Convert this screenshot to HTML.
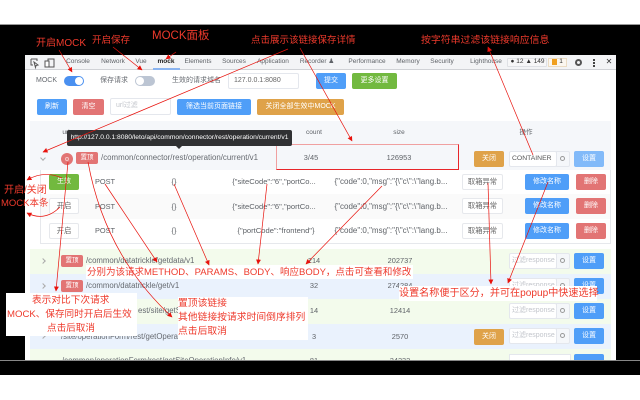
<!DOCTYPE html>
<html lang="zh"><head><meta charset="utf-8"><style>
html,body{margin:0;padding:0;background:#fff}
#p{position:relative;width:640px;height:400px;overflow:hidden;background:#fff;font-family:"Liberation Sans","Noto Sans CJK SC",sans-serif}
#p div{position:absolute;box-sizing:border-box;white-space:nowrap}
.t{font-size:6.5px;color:#5f6368;line-height:10px;height:10px;transform:translate(-50%,0)}
.n{font-size:7.4px}
.j{font-size:7.6px}
.k{font-size:8px}
.g{font-size:7.8px;color:#666a70;line-height:10px;height:10px}
.b{border-radius:2px;color:#fff;font-size:7px;text-align:center}
.bl{background:#4f9ef8}.rd{background:#e27474}.or{background:#dfa249}.gr{background:#72b93f}
.w{background:#fff;border:1px solid #e6e8ec;color:#666;border-radius:2px;font-size:7.3px;text-align:center}
.r{color:#ee3a2c;line-height:1.2}
.f{background:#fff;border:1px solid #e4e7ed;border-radius:2px;color:#c3c6cc;font-size:7px;line-height:14px;padding-left:2px;overflow:hidden}
.s{background:#f5f7fa;border:1px solid #e4e7ed;border-radius:0 2px 2px 0}
.s:after{content:"";position:absolute;left:3px;top:4px;width:5px;height:5px;box-sizing:border-box;border:1px solid #999;border-radius:50%}
.c{width:4px;height:4px;border-right:1px solid #aaa;border-top:1px solid #aaa;transform:rotate(45deg)}
</style></head><body><div id="p">
<div style="left:0;top:24px;width:640px;height:351px;background:#000;border-top:1px solid #999"></div>
<div style="left:25px;top:55px;width:591px;height:305px;background:#fff"></div>

<!-- tab bar -->
<div style="left:25px;top:55px;width:591px;height:15px;background:#f3f4f6;border-bottom:1px solid #d0d2d6"></div>
<div class="t" style="left:78px;top:57px">Console</div>
<div class="t" style="left:113px;top:57px">Network</div>
<div class="t" style="left:141px;top:57px">Vue</div>
<div class="t" style="left:166px;top:57px;color:#222;font-weight:bold">mock</div>
<div style="left:153px;top:68px;width:27px;height:2px;background:#8ab4f0"></div>
<div class="t" style="left:198px;top:57px">Elements</div>
<div class="t" style="left:234px;top:57px">Sources</div>
<div class="t" style="left:273px;top:57px">Application</div>
<div class="t" style="left:317px;top:57px">Recorder ♟</div>
<div class="t" style="left:367px;top:57px">Performance</div>
<div class="t" style="left:408px;top:57px">Memory</div>
<div class="t" style="left:442px;top:57px">Security</div>
<div class="t" style="left:486px;top:57px">Lighthouse</div>
<div style="left:507px;top:58px;width:40px;height:9px;border:1px solid #dfe1e5;border-radius:1px;background:#f7f7f8"></div>
<div class="t" style="left:517px;top:57px;color:#333">● 12</div>
<div class="t" style="left:535px;top:57px;color:#333">▲ 149</div>
<div style="left:548px;top:58px;width:19px;height:9px;border:1px solid #ebdcc4;background:#fbf7f0"></div>
<div style="left:552px;top:59px;width:5px;height:6px;background:#f0a020"></div>
<div class="t" style="left:561px;top:57px;color:#333">1</div>
<div style="left:575px;top:59px;width:7px;height:7px;border-radius:50%;border:2px solid #555"></div>
<div style="left:593px;top:59px;width:2px;height:2px;background:#444;box-shadow:0 3px 0 #444,0 6px 0 #444"></div>
<div class="t" style="left:609px;top:57px;color:#333;font-size:8px">✕</div>
<svg style="position:absolute;left:25px;top:55px" width="40" height="15"><path d="M6 4h6v2M6 4v6h2M9 7l4 3-2 .5-.5 2z" fill="none" stroke="#555" stroke-width="1"/><rect x="23" y="4" width="6" height="8" fill="none" stroke="#555"/><rect x="20" y="6" width="4" height="6" fill="#fff" stroke="#555"/></svg>

<!-- row 1 settings -->
<div class="g" style="left:36px;top:76px;font-size:7px">MOCK</div>
<div style="left:64px;top:76px;width:20px;height:10px;border-radius:5px;background:#4a90f0"></div>
<div style="left:75px;top:77px;width:8px;height:8px;border-radius:50%;background:#fff"></div>
<div class="g" style="left:100px;top:76px;font-size:7px">保存请求</div>
<div style="left:135px;top:76px;width:20px;height:10px;border-radius:5px;background:#bcc5d3"></div>
<div style="left:136px;top:77px;width:8px;height:8px;border-radius:50%;background:#fff"></div>
<div class="g" style="left:172px;top:76px;font-size:7px">生效的请求域名</div>
<div class="f" style="left:228px;top:73px;width:71px;height:16px;color:#666;padding-left:5px;line-height:14px;font-size:7px">127.0.0.1:8080</div>
<div class="b bl" style="left:316px;top:73px;width:30px;height:16px;line-height:16px">提交</div>
<div class="b gr" style="left:352px;top:73px;width:45px;height:16px;line-height:16px">更多设置</div>

<!-- row 2 -->
<div class="b bl" style="left:37px;top:99px;width:30px;height:16px;line-height:16px">刷新</div>
<div class="b rd" style="left:73px;top:99px;width:31px;height:16px;line-height:16px">清空</div>
<div class="f" style="left:110px;top:98px;width:61px;height:17px;padding-left:5px;font-size:7px">url过滤</div>
<div class="b bl" style="left:177px;top:99px;width:74px;height:16px;line-height:16px">筛选当前页面链接</div>
<div class="b or" style="left:257px;top:99px;width:87px;height:16px;line-height:16px">关闭全部生效中MOCK</div>

<!-- table -->
<div style="left:30px;top:121px;width:581px;height:49px;background:#f5f7fa"></div>
<div class="t" style="left:66px;top:128px">url</div>
<div class="t" style="left:314px;top:128px">count</div>
<div class="t" style="left:399px;top:128px">size</div>
<div class="t" style="left:526px;top:128px">操作</div>
<div class="c" style="left:41px;top:156px;transform:rotate(135deg)"></div>
<div style="left:61px;top:153px;width:12px;height:12px;border-radius:50%;background:#e27474"></div>
<div style="left:65px;top:157px;width:4px;height:4px;border-radius:50%;border:1px solid #f4c4c4"></div>
<div class="b rd" style="left:76px;top:152px;width:22px;height:12px;line-height:12px;font-size:6.5px">置顶</div>
<div class="g" style="left:101px;top:153px;font-size:7.9px">/common/connector/rest/operation/current/v1</div>
<div class="t n" style="left:311px;top:153px">3/45</div>
<div class="t n" style="left:399px;top:153px">126953</div>
<div style="left:276px;top:144px;width:183px;height:26px;border:1px solid #e8262a;border-left-color:#f0a0a0;border-top-color:#f0a0a0"></div>
<div class="b or" style="left:474px;top:151px;width:30px;height:16px;line-height:16px">关闭</div>
<div class="f" style="left:509px;top:151px;width:48px;height:16px;color:#555;font-size:6.8px">CONTAINER</div>
<div class="s" style="left:556px;top:151px;width:14px;height:16px"></div>
<div class="b" style="left:574px;top:151px;width:30px;height:16px;line-height:16px;background:#82baf9">设置</div>

<!-- sub table -->
<div style="left:40px;top:170px;width:571px;height:74px;background:#fff;border:1px solid #e6e8ec;border-top:0"></div>
<div style="left:41px;top:194px;width:569px;height:25px;background:#fafafa"></div>
<div class="b gr" style="left:49px;top:174px;width:30px;height:16px;line-height:16px">生效</div>
<div class="w" style="left:49px;top:198px;width:30px;height:16px;line-height:14px">开启</div>
<div class="w" style="left:49px;top:223px;width:30px;height:16px;line-height:14px">开启</div>
<div class="t n" style="left:105px;top:177px">POST</div><div class="t n" style="left:105px;top:202px">POST</div><div class="t n" style="left:105px;top:226px">POST</div>
<div class="t n" style="left:174px;top:177px">{}</div><div class="t n" style="left:174px;top:202px">{}</div><div class="t n" style="left:174px;top:226px">{}</div>
<div class="t j" style="left:274px;top:177px">{"siteCode":"6","portCo...</div>
<div class="t j" style="left:274px;top:202px">{"siteCode":"6","portCo...</div>
<div class="t j" style="left:276px;top:226px">{"portCode":"frontend"}</div>
<div class="t k" style="left:391px;top:177px">{"code":0,"msg":"{\"c\":\"lang.b...</div>
<div class="t k" style="left:391px;top:202px">{"code":0,"msg":"{\"c\":\"lang.b...</div>
<div class="t k" style="left:391px;top:226px">{"code":0,"msg":"{\"c\":\"lang.b...</div>
<div class="w" style="left:462px;top:174px;width:41px;height:16px;line-height:14px">取箱异常</div>
<div class="w" style="left:462px;top:198px;width:41px;height:16px;line-height:14px">取箱异常</div>
<div class="w" style="left:462px;top:223px;width:41px;height:16px;line-height:14px">取箱异常</div>
<div class="b bl" style="left:525px;top:174px;width:44px;height:16px;line-height:16px">修改名称</div>
<div class="b bl" style="left:525px;top:198px;width:44px;height:16px;line-height:16px">修改名称</div>
<div class="b bl" style="left:525px;top:223px;width:44px;height:16px;line-height:16px">修改名称</div>
<div class="b rd" style="left:576px;top:174px;width:30px;height:16px;line-height:16px">删除</div>
<div class="b rd" style="left:576px;top:198px;width:30px;height:16px;line-height:16px">删除</div>
<div class="b rd" style="left:576px;top:223px;width:30px;height:16px;line-height:16px">删除</div>

<!-- colored rows -->
<div style="left:30px;top:249px;width:581px;height:25px;background:#f3fbec"></div>
<div style="left:30px;top:274px;width:581px;height:25px;background:#eaf2fd"></div>
<div style="left:30px;top:299px;width:581px;height:25px;background:#f3fbec"></div>
<div style="left:30px;top:324px;width:581px;height:25px;background:#eaf2fd"></div>
<div style="left:30px;top:349px;width:581px;height:11px;background:#f3fbec"></div>

<div class="b rd" style="left:61px;top:255px;width:22px;height:12px;line-height:12px;font-size:6.5px">置顶</div>
<div class="b rd" style="left:61px;top:280px;width:22px;height:12px;line-height:12px;font-size:6.5px">置顶</div>
<div class="c" style="left:41px;top:259px"></div>
<div class="c" style="left:41px;top:284px"></div>
<div class="c" style="left:41px;top:334px"></div>
<div class="g" style="left:86px;top:256px">/common/datatrickle/getdata/v1</div>
<div class="g" style="left:86px;top:281px">/common/datatrickle/get/v1</div>
<div class="g" style="left:138px;top:306px">est/site/getSite</div>
<div class="g" style="left:61px;top:332px">/site/operationForm/rest/getOperationForm</div>
<div class="g" style="left:62px;top:356px">/common/operationForm/rest/getSiteOperationInfo/v1</div>
<div class="t n" style="left:400px;top:256px">202737</div>
<div class="t n" style="left:400px;top:281px">274284</div>
<div class="t n" style="left:400px;top:306px">12414</div>
<div class="t n" style="left:400px;top:332px">2570</div>
<div class="t n" style="left:400px;top:356px">24232</div>
<div class="t n" style="left:314px;top:256px">214</div>
<div class="t n" style="left:314px;top:281px">32</div>
<div class="t n" style="left:314px;top:306px">14</div>
<div class="t n" style="left:314px;top:332px">3</div>
<div class="t n" style="left:314px;top:356px">81</div>
<div class="b or" style="left:474px;top:329px;width:30px;height:16px;line-height:16px">关闭</div>

<div class="f" style="left:509px;top:253px;width:48px;height:16px">过滤response</div><div class="s" style="left:556px;top:253px;width:14px;height:16px"></div><div class="b bl" style="left:574px;top:253px;width:30px;height:16px;line-height:16px">设置</div>
<div class="f" style="left:509px;top:278px;width:48px;height:16px">过滤response</div><div class="s" style="left:556px;top:278px;width:14px;height:16px"></div><div class="b bl" style="left:574px;top:278px;width:30px;height:16px;line-height:16px">设置</div>
<div class="f" style="left:509px;top:303px;width:48px;height:16px">过滤response</div><div class="s" style="left:556px;top:303px;width:14px;height:16px"></div><div class="b bl" style="left:574px;top:303px;width:30px;height:16px;line-height:16px">设置</div>
<div class="f" style="left:509px;top:328px;width:48px;height:16px">过滤response</div><div class="s" style="left:556px;top:328px;width:14px;height:16px"></div><div class="b bl" style="left:574px;top:328px;width:30px;height:16px;line-height:16px">设置</div>
<div style="left:509px;top:354px;width:62px;height:6px;background:#fff;border:1px solid #e4e7ed;border-bottom:0"></div>
<div class="b bl" style="left:574px;top:354px;width:30px;height:6px;border-radius:2px 2px 0 0"></div>

<!-- bottom black strip clips the last row -->
<div style="left:0;top:360px;width:640px;height:15px;background:#000;border-top:1px solid #888"></div>

<!-- tooltip -->
<div style="left:67px;top:130px;width:225px;height:16px;background:#303133;border-radius:2px;color:#fff;font-size:6.7px;line-height:16px;text-align:center">http://127.0.0.1:8080/leto/api/common/connector/rest/operation/current/v1</div>
<div style="left:176px;top:146px;width:0;height:0;border:3px solid transparent;border-top-color:#303133"></div>

<!-- white note boxes -->
<div style="left:6px;top:293px;width:131px;height:43px;background:#fff"></div>
<div style="left:178px;top:297px;width:130px;height:43px;background:#fff"></div>
<div style="left:86px;top:265px;width:327px;height:14px;background:#fff"></div>
<div style="left:399px;top:286px;width:198px;height:15px;background:#fff"></div>

<!-- annotations -->
<svg style="position:absolute;left:0;top:0" width="640" height="400">
<defs><marker id="a" markerUnits="userSpaceOnUse" markerWidth="5" markerHeight="5" refX="4.5" refY="2.5" orient="auto"><path d="M0 0L5 2.5L0 5z" fill="#e8120c"/></marker></defs>
<g fill="none" stroke="#e8120c" stroke-width=".7" marker-end="url(#a)">
<path d="M59 50L72 72"/><path d="M113 47L142 70"/><path d="M176 52L166 59"/>
<path d="M288 49L43 152"/><path d="M300 48L352 141"/><path d="M533 155L488 47"/>
<path d="M68 162L56 291"/><path d="M88 162Q105 255 172 317"/>
<path d="M105 184L157 262"/><path d="M174 184L209 265"/><path d="M267 184L258 264"/><path d="M382 186L306 264"/>
<path d="M488 183L491 284"/><path d="M548 182L508 283"/>
<path d="M62 178Q44 170 27 180"/><path d="M60 207Q45 222 27 213"/>
</g></svg>
<div class="r" style="left:36px;top:38px;font-size:10px">开启MOCK</div>
<div class="r" style="left:92px;top:35px;font-size:9.5px">开启保存</div>
<div class="r" style="left:152px;top:30px;font-size:11.5px">MOCK面板</div>
<div class="r" style="left:251px;top:35px;font-size:9.5px">点击展示该链接保存详情</div>
<div class="r" style="left:421px;top:35px;font-size:9.9px">按字符串过滤该链接响应信息</div>
<div class="r" style="left:4px;top:185px;font-size:10px">开启/关闭</div>
<div class="r" style="left:1px;top:198px;font-size:9.5px">MOCK本条</div>
<div class="r" style="left:87px;top:267px;font-size:9.5px">分别为该请求METHOD、PARAMS、BODY、响应BODY，点击可查看和修改</div>
<div class="r" style="left:32px;top:295px;font-size:9.7px">表示对比下次请求</div>
<div class="r" style="left:7px;top:309px;font-size:9.6px">MOCK、保存同时开启后生效</div>
<div class="r" style="left:47px;top:323px;font-size:9.6px">点击后取消</div>
<div class="r" style="left:178px;top:298px;font-size:9.8px">置顶该链接</div>
<div class="r" style="left:178px;top:312px;font-size:9.8px">其他链接按请求时间倒序排列</div>
<div class="r" style="left:178px;top:326px;font-size:9.8px">点击后取消</div>
<div class="r" style="left:399px;top:288px;font-size:10.1px">设置名称便于区分，并可在popup中快速选择</div>
</div></body></html>
